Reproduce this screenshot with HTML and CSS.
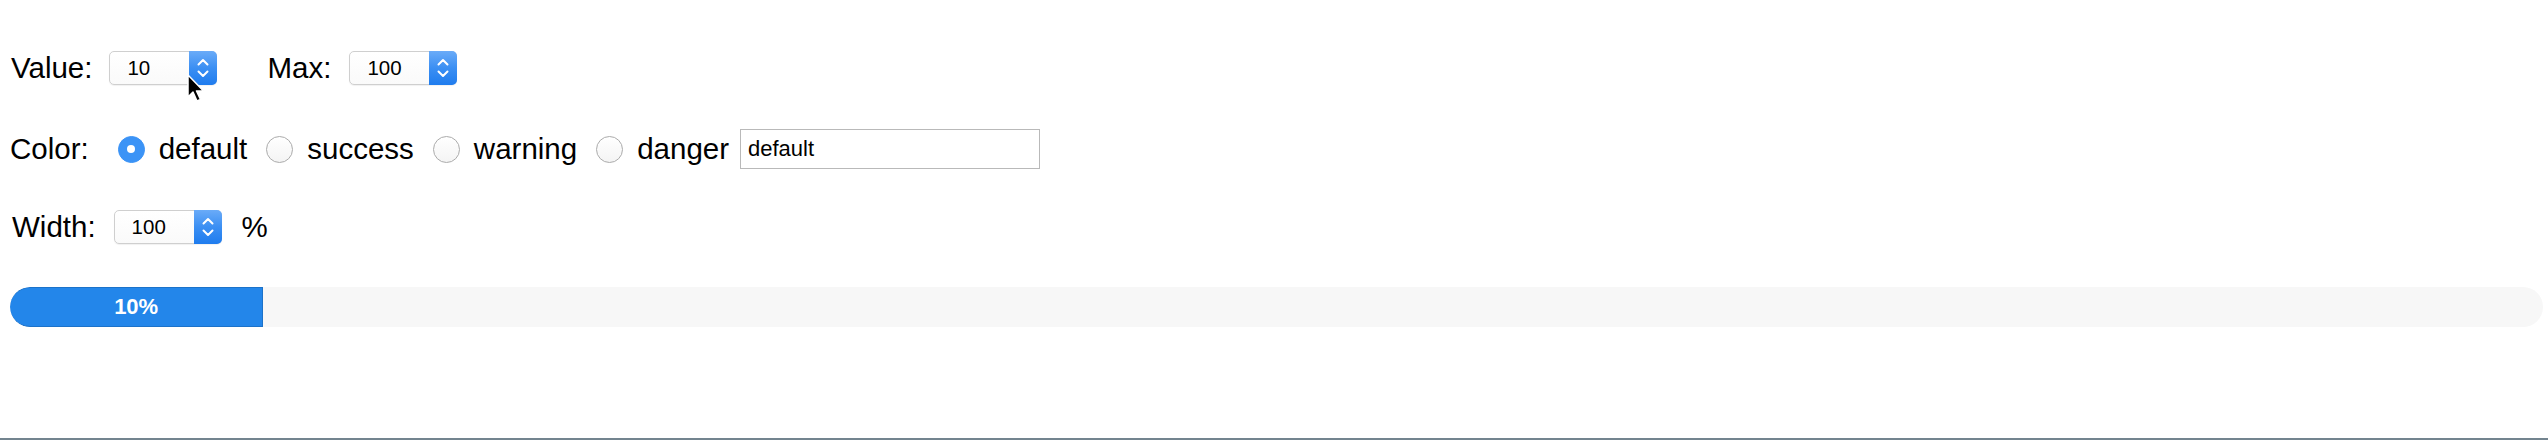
FILE: index.html
```html
<!DOCTYPE html>
<html lang="en">
<head>
<meta charset="utf-8">
<title>Progress demo</title>
<link rel="stylesheet" href="styles.css">
</head>
<body>
<div class="page">
  <div class="row row-value">
    <span class="label">Value:</span>
    <div class="spin spin-value">
      <span class="spin-val">10</span>
      <span class="spin-step">
        <svg width="12" height="22" viewBox="0 0 12 22"><path d="M1.5 7.5 L6 3 L10.5 7.5" fill="none" stroke="#fff" stroke-width="2" stroke-linecap="round" stroke-linejoin="round"/><path d="M1.5 14.5 L6 19 L10.5 14.5" fill="none" stroke="#fff" stroke-width="2" stroke-linecap="round" stroke-linejoin="round"/></svg>
      </span>
    </div>
    <span class="label label-max">Max:</span>
    <div class="spin spin-max">
      <span class="spin-val">100</span>
      <span class="spin-step">
        <svg width="12" height="22" viewBox="0 0 12 22"><path d="M1.5 7.5 L6 3 L10.5 7.5" fill="none" stroke="#fff" stroke-width="2" stroke-linecap="round" stroke-linejoin="round"/><path d="M1.5 14.5 L6 19 L10.5 14.5" fill="none" stroke="#fff" stroke-width="2" stroke-linecap="round" stroke-linejoin="round"/></svg>
      </span>
    </div>
    <svg class="cursor" width="18" height="30" viewBox="0 0 18 30"><path d="M1 1 L1 23 L6 18 L10 27 L13.5 25.5 L9.5 17 L16.5 17 Z" fill="#000" stroke="#fff" stroke-width="1.5" stroke-linejoin="round"/></svg>
  </div>

  <div class="row row-color">
    <span class="label label-color">Color:</span>
    <span class="radio checked"></span><span class="opt">default</span>
    <span class="radio"></span><span class="opt">success</span>
    <span class="radio"></span><span class="opt">warning</span>
    <span class="radio"></span><span class="opt opt-last">danger</span>
    <div class="textbox">default</div>
  </div>

  <div class="row row-width">
    <span class="label">Width:</span>
    <div class="spin spin-width">
      <span class="spin-val">100</span>
      <span class="spin-step">
        <svg width="12" height="22" viewBox="0 0 12 22"><path d="M1.5 7.5 L6 3 L10.5 7.5" fill="none" stroke="#fff" stroke-width="2" stroke-linecap="round" stroke-linejoin="round"/><path d="M1.5 14.5 L6 19 L10.5 14.5" fill="none" stroke="#fff" stroke-width="2" stroke-linecap="round" stroke-linejoin="round"/></svg>
      </span>
    </div>
    <span class="label pct">%</span>
  </div>

  <div class="progress">
    <div class="progress-bar" style="width: 10%">10%</div>
  </div>

  <div class="rule"></div>
</div>
</body>
</html>
```

FILE: styles.css
```css
* { box-sizing: border-box; }
html, body { margin: 0; padding: 0; background: #fff; }
body {
  font-family: "Liberation Sans", Arial, Helvetica, sans-serif;
  color: #000;
}
.page {
  height: 440px;
  display: flex;
  flex-direction: column;
  padding: 0 5px 0 10px;
}
.row {
  display: flex;
  align-items: center;
  height: 40px;
  font-size: 29.5px;
  position: relative;
}
.row-value { margin-top: 48px; }
.row-color { margin-top: 41px; }
.row-width { margin-top: 38px; }

.label { white-space: nowrap; line-height: 1; }
.row-value .label:first-child { margin-left: 1px; margin-right: 17px; }
.label-max { margin-left: 50px; margin-right: 18px; }
.row-width .label:first-child { margin-left: 2px; margin-right: 18px; }
.pct { margin-left: 20px; }

.spin {
  width: 108px;
  height: 34px;
  border: 1px solid #cfcfcf;
  border-radius: 5px;
  background: linear-gradient(#ffffff, #fafafa);
  display: flex;
  align-items: center;
  box-shadow: 0 1px 1px rgba(0,0,0,0.06);
}
.spin-val {
  flex: 1;
  font-size: 20.5px;
  padding-left: 17px;
  line-height: 1;
}
.spin-step {
  width: 28px;
  height: 34px;
  margin: -1px -1px -1px 0;
  border-radius: 0 5px 5px 0;
  background: linear-gradient(#6aabf8, #3b8ff3 50%, #1f7cee);
  display: flex;
  align-items: center;
  justify-content: center;
}
.spin-step svg { display: block; }

.cursor {
  position: absolute;
  left: 177px;
  top: 26px;
}

.label-color { margin-right: 29px; }
.radio {
  width: 27px;
  height: 27px;
  border-radius: 50%;
  border: 1px solid #ababab;
  background: linear-gradient(#ffffff, #f4f4f4);
  flex: none;
  margin-right: 14px;
  position: relative;
}
.radio.checked {
  border-color: #3b93f6;
  background: #3b93f6;
}
.radio.checked::after {
  content: "";
  position: absolute;
  left: 50%;
  top: 50%;
  width: 8px;
  height: 8px;
  margin: -4px 0 0 -4px;
  border-radius: 50%;
  background: #fff;
}
.opt { margin-right: 19px; line-height: 1; white-space: nowrap; }
.opt-last { margin-right: 11px; }
.textbox {
  width: 300px;
  height: 40px;
  border: 1px solid #b9b9b9;
  font-size: 22px;
  padding-left: 7px;
  display: flex;
  align-items: center;
  background: #fff;
}

.progress {
  margin-top: 40px;
  height: 40px;
  border-radius: 20px;
  background: #f7f7f7;
  overflow: hidden;
  display: flex;
}
.progress-bar {
  height: 40px;
  background: #2386ea;
  border: 1px solid #1c72c9;
  border-left: none;
  border-radius: 20px 0 0 20px;
  color: #fff;
  font-weight: bold;
  font-size: 22px;
  display: flex;
  align-items: center;
  justify-content: center;
}

.rule {
  margin-top: auto;
  margin-left: -10px;
  margin-right: -5px;
  height: 2px;
  background: #73848f;
}
```
